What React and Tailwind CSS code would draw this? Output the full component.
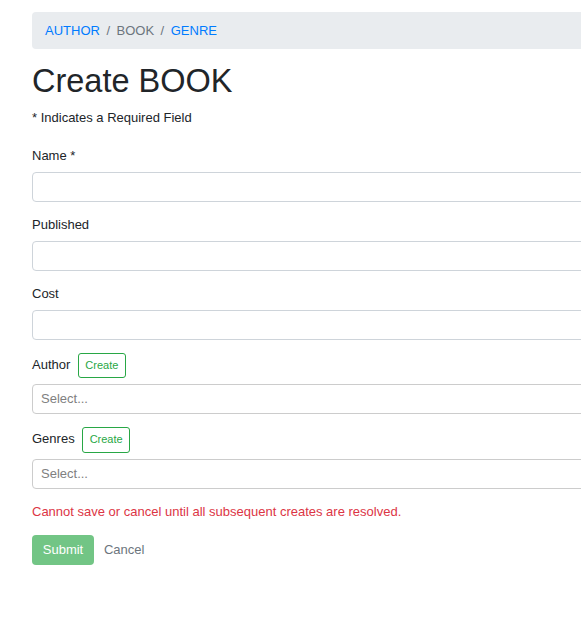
import React from "react";

function Field({ label }) {
  return (
    <div className="mb-[13px]">
      <label className="block mb-[6.5px] leading-[19.5px]">{label}</label>
      <input className="block w-full h-[30px] border border-[#ced4da] rounded-[4px] px-[9.75px] bg-white outline-none" />
    </div>
  );
}

function SelectField({ label }) {
  return (
    <div className="mb-[13px]">
      <div className="flex items-baseline gap-[7.5px] mb-[6px]">
        <span className="leading-[19.5px]">{label}</span>
        <button className="h-[25.5px] px-[6.5px] border border-[#28a745] text-[#28a745] rounded-[3px] text-[11px] leading-[17px] bg-white">
          Create
        </button>
      </div>
      <div className="flex items-center h-[30px] border border-[#cccccc] rounded-[4px] px-[8px] bg-white">
        <span className="text-[#808080]">Select...</span>
      </div>
    </div>
  );
}

export default function App() {
  return (
    <div
      className="w-[581px] min-h-[641px] overflow-hidden bg-white text-[13px] leading-[19.5px] text-[#212529]"
      style={{ fontFamily: '"Liberation Sans", Arial, sans-serif' }}
    >
      <div className="w-[620px] ml-[32px] pt-[12px]">
        <nav className="flex items-center h-[37px] px-[13px] bg-[#e9ecef] rounded-[4px]">
          <span className="text-[#007bff]">AUTHOR</span>
          <span className="text-[#6c757d] px-[6.5px]">/</span>
          <span className="text-[#6c757d]">BOOK</span>
          <span className="text-[#6c757d] px-[6.5px]">/</span>
          <span className="text-[#007bff]">GENRE</span>
        </nav>
        <h1 className="mt-[13px] mb-[7px] text-[32.5px] leading-[39px] font-normal">Create BOOK</h1>
        <p className="leading-[19.5px]">* Indicates a Required Field</p>
        <form className="mt-[18px]">
          <Field label="Name *" />
          <Field label="Published" />
          <Field label="Cost" />
          <SelectField label="Author" />
          <SelectField label="Genres" />
          <div className="text-[#dc3545] leading-[19.5px] mb-[13.5px]">
            Cannot save or cancel until all subsequent creates are resolved.
          </div>
          <div className="flex">
            <button
              type="button"
              className="h-[30px] px-[10.75px] bg-[#28a745] text-white rounded-[4px] opacity-65"
            >
              Submit
            </button>
            <button type="button" className="h-[30px] pl-[10px] pr-[10.75px] text-[#6c757d]">
              Cancel
            </button>
          </div>
        </form>
      </div>
    </div>
  );
}
